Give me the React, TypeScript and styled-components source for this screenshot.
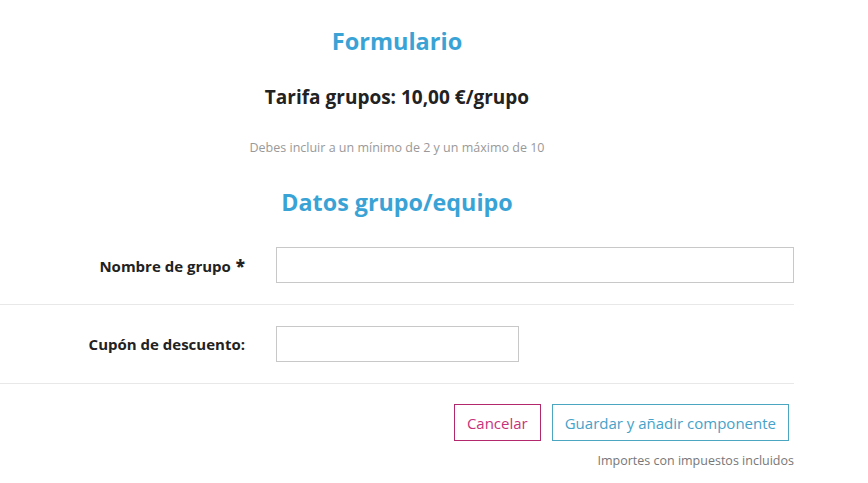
import React from 'react';
import styled, { createGlobalStyle } from 'styled-components';

const GlobalStyle = createGlobalStyle`
  html, body {
    margin: 0;
    padding: 0;
    background: #fff;
    font-family: 'Open Sans', 'Liberation Sans', sans-serif;
    color: #222;
  }
`;

const Page = styled.main`
  width: 794px;
  padding-top: 26px;
`;

const Title = styled.h1`
  margin: 0;
  text-align: center;
  color: #3aa3d6;
  font-size: 23.5px;
  line-height: 30px;
  font-weight: 700;
`;

const Rate = styled.h2`
  margin: 28px 0 0;
  text-align: center;
  color: #222;
  font-size: 19px;
  line-height: 26px;
  font-weight: 700;
`;

const Note = styled.p`
  margin: 29px 0 0;
  text-align: center;
  color: #999;
  font-size: 12.5px;
  line-height: 18px;
`;

const SectionTitle = styled.h2`
  margin: 29px 0 8px;
  text-align: center;
  color: #3aa3d6;
  font-size: 23.3px;
  line-height: 32px;
  font-weight: 700;
`;

const FormRow = styled.div`
  display: grid;
  grid-template-columns: 261px 1fr;
  align-items: center;
  padding: 21px 0 21px;
  border-bottom: 1px solid #e8e8e8;
`;

const Label = styled.label`
  text-align: right;
  padding-right: 16px;
  font-size: 15px;
  font-weight: 700;
  color: #222;
`;

const Required = styled.span`
  margin-left: 5px;
  font-size: 17px;
  font-weight: 800;
`;

const Field = styled.div`
  padding-left: 15px;
`;

const Input = styled.input<{ $width?: number }>`
  box-sizing: border-box;
  display: block;
  width: ${(p) => (p.$width ? `${p.$width}px` : '100%')};
  height: 36px;
  border: 1px solid #c8c8c8;
  background: #fff;
  padding: 0 10px;
  font-family: inherit;
  font-size: 14px;
  outline: none;
`;

const Actions = styled.div`
  display: flex;
  justify-content: flex-end;
  gap: 11px;
  margin-top: 20px;
  padding-right: 5px;
`;

const Button = styled.button<{ $tone: 'cancel' | 'save' }>`
  box-sizing: border-box;
  height: 37px;
  padding: 0 12px;
  background: #fff;
  font-family: inherit;
  font-size: 15px;
  cursor: pointer;
  border: 1px solid ${(p) => (p.$tone === 'cancel' ? '#b3286c' : '#4ba7c1')};
  color: ${(p) => (p.$tone === 'cancel' ? '#c8327a' : '#45a2c9')};
`;

const TaxNote = styled.p`
  margin: 12px 0 0;
  text-align: right;
  color: #777;
  font-size: 12.5px;
  line-height: 16px;
`;

export default function App() {
  return (
    <>
      <GlobalStyle />
      <Page>
        <Title>Formulario</Title>
        <Rate>Tarifa grupos: 10,00 €/grupo</Rate>
        <Note>Debes incluir a un mínimo de 2 y un máximo de 10</Note>
        <SectionTitle>Datos grupo/equipo</SectionTitle>

        <FormRow>
          <Label htmlFor="group-name">
            Nombre de grupo<Required>*</Required>
          </Label>
          <Field>
            <Input id="group-name" type="text" />
          </Field>
        </FormRow>

        <FormRow>
          <Label htmlFor="coupon">Cupón de descuento:</Label>
          <Field>
            <Input id="coupon" type="text" $width={243} />
          </Field>
        </FormRow>

        <Actions>
          <Button $tone="cancel">Cancelar</Button>
          <Button $tone="save">Guardar y añadir componente</Button>
        </Actions>
        <TaxNote>Importes con impuestos incluidos</TaxNote>
      </Page>
    </>
  );
}
